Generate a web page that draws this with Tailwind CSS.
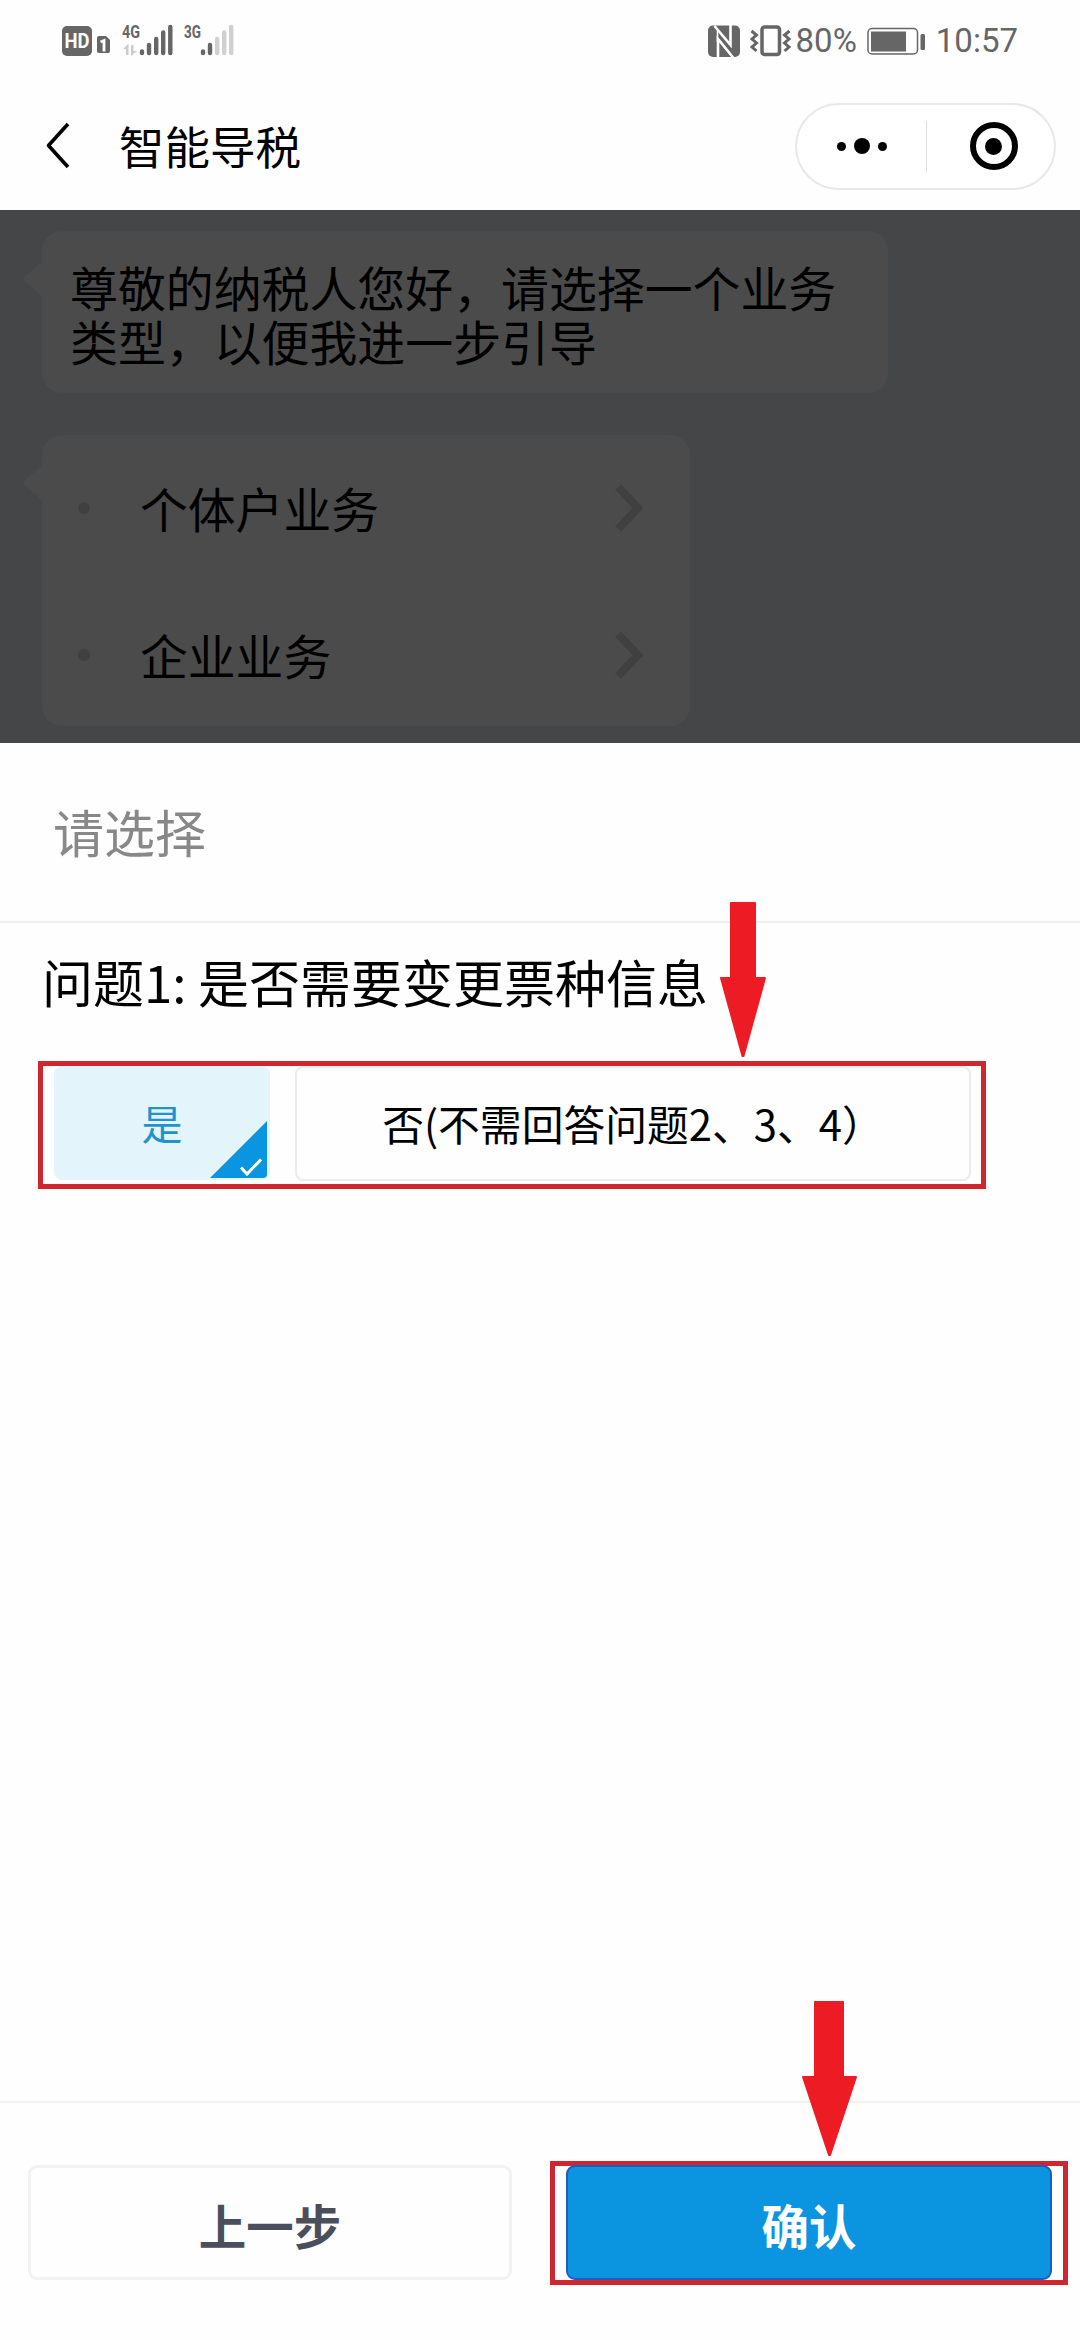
<!DOCTYPE html>
<html lang="zh-CN">
<head>
<meta charset="utf-8">
<title>智能导税</title>
<script src="https://cdn.jsdelivr.net/npm/@tailwindcss/browser@4"></script>
</head>
<body class="bg-white">
<div class="relative flex h-[2340px] w-[1080px] flex-col overflow-hidden bg-[#fefefe] font-['Noto_Sans_CJK_SC',sans-serif] text-black">

  <!-- Status bar -->
  <div class="flex h-20 shrink-0 items-start justify-between pr-[62px] pl-[62px]">
    <svg class="mt-5 h-10 w-[174px]" viewBox="62 20 174 40" fill="#666">
      <rect x="62" y="26" width="30" height="30" rx="5"/>
      <text x="77" y="48" text-anchor="middle" textLength="25" lengthAdjust="spacingAndGlyphs" font-family="Roboto, sans-serif" font-weight="700" font-size="20" fill="#fff">HD</text>
      <path d="M99 36h7l4 4v11a2 2 0 0 1-2 2h-9a2 2 0 0 1-2-2V38a2 2 0 0 1 2-2z"/>
      <path d="M100.500 42l3.500-1.500v11" fill="none" stroke="#fff" stroke-width="2.800"/>
      <text x="122" y="38" textLength="18" lengthAdjust="spacingAndGlyphs" font-family="Roboto, sans-serif" font-weight="700" font-size="18">4G</text>
      <g fill="#ccc"><path d="M123 49l5.500-5.500V55H126v-6zM131 45h2.500v6h3.500l-6 5z"/></g>
      <g stroke="#666" stroke-width="4.400" stroke-linecap="round">
        <path d="M142 51.500v1.500M149 45v8M156.200 39v14M163.200 32.500v20.500M170.300 27v26"/>
        <path d="M203 51.500v1.500M210 45v8"/>
        <path stroke="#d0d0d0" d="M217.200 39v14M224.200 32.500v20.500M231.200 27v26"/>
      </g>
      <text x="184" y="38" textLength="17" lengthAdjust="spacingAndGlyphs" font-family="Roboto, sans-serif" font-weight="700" font-size="18">3G</text>
    </svg>
    <div class="mt-5 flex h-[42px] items-center font-[Roboto,sans-serif] text-[33px] leading-[42px] text-[#666]">
      <svg class="h-10 w-[90px]" viewBox="705 20 90 40" fill="none">
        <rect x="707" y="24.500" width="32" height="31.500" rx="5" fill="#666"/>
        <path d="M713.500 25L729.500 44V23" stroke="#fff" stroke-width="2.600"/>
        <path d="M732.500 57L717 38V57" stroke="#fff" stroke-width="2.600"/>
        <path d="M716.500 28v13" stroke="#fff" stroke-width="1.600"/>
        <rect x="761" y="26" width="17.500" height="27.500" rx="2.500" stroke="#666" stroke-width="3.500"/>
        <path d="M750.500 29.500l5 4-4.500 4 4.500 4-4.500 4 4.500 4M788.500 29.500l-5 4 4.500 4-4.500 4 4.500 4-4.500 4" transform="translate(0 .5)" stroke="#666" stroke-width="3"/>
      </svg>
      <span>80%</span>
      <svg class="mr-[9px] ml-[9px] h-10 w-[61px]" viewBox="866 20 61 40">
        <rect x="868" y="27.500" width="49.500" height="25.500" rx="4" fill="none" stroke="#666" stroke-width="1.500"/>
        <rect x="871" y="30.500" width="35" height="20" fill="#666"/>
        <rect x="920.500" y="33" width="4.500" height="16" rx="1.500" fill="#666"/>
      </svg>
      <span>10:57</span>
    </div>
  </div>

  <!-- Navigation bar -->
  <header class="flex h-[130px] shrink-0 items-center pr-6 pl-[46px]">
    <svg class="h-[50px] w-6" viewBox="0 0 24 50"><path d="M22 4L2.500 25.500 22 47" fill="none" stroke="#000" stroke-width="3.600" stroke-linejoin="round"/></svg>
    <h1 class="ml-[49px] text-[45.5px] leading-[60px]">智能导税</h1>
    <div class="mt-[2px] ml-auto flex h-[87px] w-[261px] items-center rounded-full border-2 border-[#e8e8e8] bg-white">
      <div class="flex w-[129px] items-center justify-center gap-2">
        <i class="size-[9px] rounded-full bg-black"></i><i class="size-4 rounded-full bg-black"></i><i class="size-[9px] rounded-full bg-black"></i>
      </div>
      <div class="h-[51px] w-px bg-[#dcdcdc]"></div>
      <div class="flex flex-1 justify-center pl-1.5">
        <div class="flex size-12 items-center justify-center rounded-full border-6 border-black"><i class="size-[17px] rounded-full bg-black"></i></div>
      </div>
    </div>
  </header>

  <!-- Dimmed chat -->
  <main class="flex h-[533px] shrink-0 flex-col items-start gap-[42px] bg-[#454648] pt-[21px] pl-[42px]">
    <div class="relative h-[162px] w-[846px] rounded-[20px] bg-[#4b4b4b] pt-[28px] pl-7 text-[47.9px] leading-[54px]">
      <svg class="absolute top-[30px] -left-[19px] h-9 w-5" viewBox="0 0 20 36"><path d="M20 0v36L2 21q-3-3 0-6z" fill="#4b4b4b"/></svg>
      尊敬的纳税人您好，请选择一个业务<br>类型，以便我进一步引导
    </div>
    <div class="relative h-[291px] w-[648px] rounded-[20px] bg-[#4b4b4b] text-[47.8px]">
      <svg class="absolute top-[30px] -left-[19px] h-9 w-5" viewBox="0 0 20 36"><path d="M20 0v36L2 21q-3-3 0-6z" fill="#4b4b4b"/></svg>
      <div class="flex h-[146px] items-center pr-[46px] pl-9">
        <i class="size-3 rounded-full bg-[#404040]"></i>
        <span class="ml-[50px] leading-[54px]">个体户业务</span>
        <svg class="ml-auto h-[50px] w-[30px]" viewBox="0 0 30 50"><path d="M4 4l20 21L4 46" fill="none" stroke="#404040" stroke-width="8"/></svg>
      </div>
      <div class="flex h-[147px] items-center pr-[46px] pl-9">
        <i class="size-3 rounded-full bg-[#404040]"></i>
        <span class="ml-[50px] leading-[54px]">企业业务</span>
        <svg class="ml-auto h-[50px] w-[30px]" viewBox="0 0 30 50"><path d="M4 4l20 21L4 46" fill="none" stroke="#404040" stroke-width="8"/></svg>
      </div>
    </div>
  </main>

  <!-- Question sheet -->
  <section class="flex flex-1 flex-col">
    <div class="flex h-[180px] shrink-0 items-center border-b-2 border-[#efefef] pb-[2px] pl-[53px] text-[51px] leading-[60px] text-[#888]">请选择</div>
    <h2 class="mt-[28px] pl-[42px] text-[51px] leading-[60px] whitespace-pre">问题1: 是否需要变更票种信息</h2>
    <div class="mt-[50px] ml-[38px] flex h-[128px] w-[948px] items-start gap-[25px] border-5 border-[#d0262f] pl-[11px]">
      <div class="relative flex h-[114px] w-[216px] items-center justify-center overflow-hidden rounded-lg bg-[#e4f4fb] text-[41px] text-[#1f94cb]">
        是
        <svg class="absolute right-[3px] bottom-0.5 h-[57px] w-[57px]" viewBox="0 0 57 57"><path d="M57 0v53q0 4-4 4H0z" fill="#0b94df"/><path d="M31 46.500l6 6.500 14-14.500" fill="none" stroke="#fff" stroke-width="3"/></svg>
      </div>
      <div class="flex h-[115px] w-[676px] items-center justify-center rounded-lg border-[2.5px] border-[#ebebeb] text-[41.8px]">否(不需回答问题2、3、4）</div>
    </div>
  </section>

  <!-- Action bar -->
  <footer class="flex h-[239px] shrink-0 items-start border-t-2 border-[#f2f2f2] pt-[58px] pl-7 text-[47.5px] font-bold">
    <div class="mt-1 flex h-[115px] w-[484px] items-center justify-center rounded-[9px] border-3 border-[#f2f2f2] pt-1 text-[#4b4f5c]">上一步</div>
    <div class="ml-[38px] flex h-[124px] w-[518px] items-start justify-center border-5 border-[#d0262f]">
      <div class="-mt-px flex h-[115px] w-[486px] items-center justify-center rounded-[9px] border-2 border-[#1d5cc4] bg-[#0b94df] pt-1 text-white">确认</div>
    </div>
  </footer>

  <!-- Callout arrows laid over the screen -->
  <svg class="absolute top-[902px] left-[720px] h-[156px] w-[46px]" viewBox="0 0 46 156"><path d="M11 1h24v75h10L23.500 154h-1L1 76h10z" fill="#ed1c24" stroke="#ed1c24" stroke-width="2" stroke-linejoin="round"/></svg>
  <svg class="absolute top-[2001px] left-[802px] h-[156px] w-[55px]" viewBox="0 0 55 156"><path d="M13 1h28v75h13L28 154h-1L1 76h12z" fill="#ed1c24" stroke="#ed1c24" stroke-width="2" stroke-linejoin="round"/></svg>
</div>
</body>
</html>
